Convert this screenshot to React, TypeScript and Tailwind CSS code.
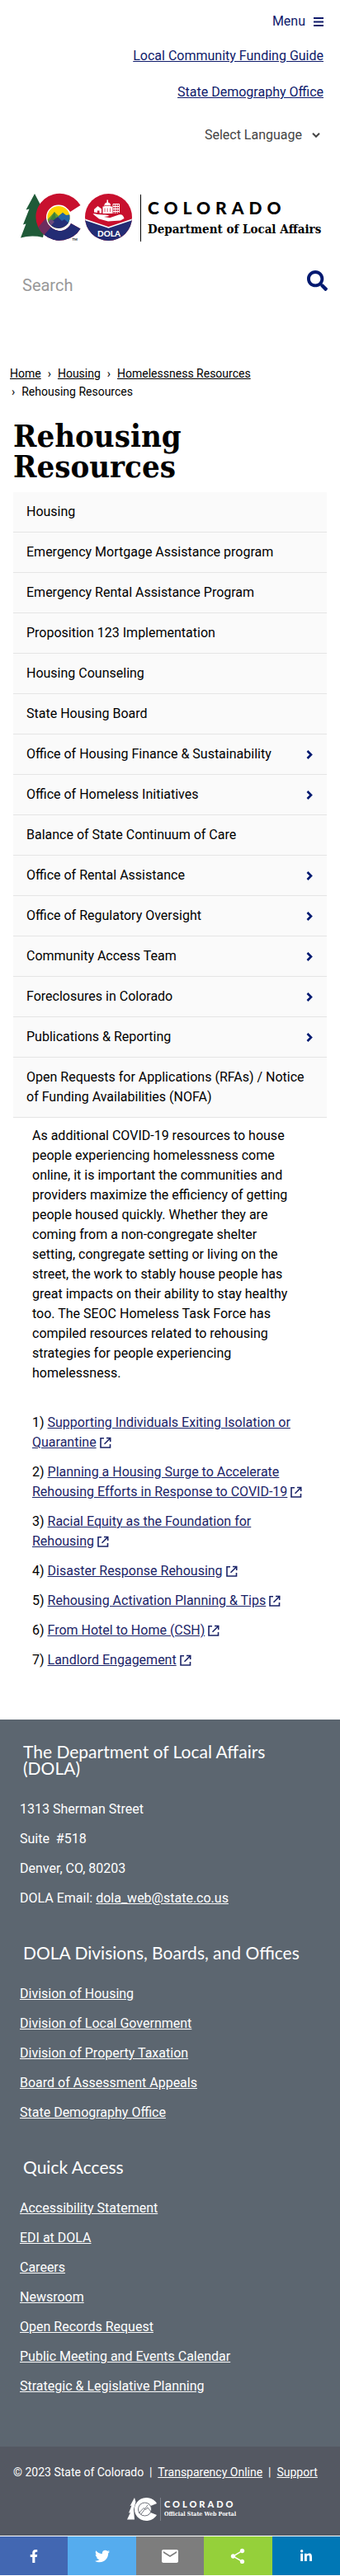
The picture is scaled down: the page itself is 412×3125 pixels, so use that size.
import React from "react";
import { FaFacebookF, FaTwitter, FaLinkedinIn, FaSearch } from "react-icons/fa";
import { MdEmail, MdShare } from "react-icons/md";

const sections: { label: string; expandable?: boolean }[] = [
  { label: "Housing" },
  { label: "Emergency Mortgage Assistance program" },
  { label: "Emergency Rental Assistance Program" },
  { label: "Proposition 123 Implementation" },
  { label: "Housing Counseling" },
  { label: "State Housing Board" },
  { label: "Office of Housing Finance & Sustainability", expandable: true },
  { label: "Office of Homeless Initiatives", expandable: true },
  { label: "Balance of State Continuum of Care" },
  { label: "Office of Rental Assistance", expandable: true },
  { label: "Office of Regulatory Oversight", expandable: true },
  { label: "Community Access Team", expandable: true },
  { label: "Foreclosures in Colorado", expandable: true },
  { label: "Publications & Reporting", expandable: true },
  { label: "Open Requests for Applications (RFAs) / Notice of Funding Availabilities (NOFA)" },
];

const resources = [
  "Supporting Individuals Exiting Isolation or Quarantine",
  "Planning a Housing Surge to Accelerate Rehousing Efforts in Response to COVID-19",
  "Racial Equity as the Foundation for Rehousing",
  "Disaster Response Rehousing",
  "Rehousing Activation Planning & Tips",
  "From Hotel to Home (CSH)",
  "Landlord Engagement",
];

const divisions = [
  "Division of Housing",
  "Division of Local Government",
  "Division of Property Taxation",
  "Board of Assessment Appeals",
  "State Demography Office",
];

const quickAccess = [
  "Accessibility Statement",
  "EDI at DOLA",
  "Careers",
  "Newsroom",
  "Open Records Request",
  "Public Meeting and Events Calendar",
  "Strategic & Legislative Planning",
];

function DolaEmblem() {
  return (
    <svg viewBox="24 234 138 60" className="h-[60px] w-[138px] shrink-0" aria-hidden="true">
      <defs>
        <clipPath id="c-shape">
          <path d="M97.500 249 A29 28.500 0 1 0 97.500 277.500 L86 271 A15 15 0 1 1 85 257 Z" />
        </clipPath>
        <clipPath id="c-core">
          <circle cx="71" cy="263.500" r="13.600" />
        </clipPath>
        <clipPath id="seal">
          <circle cx="131.500" cy="263.500" r="28.500" />
        </clipPath>
      </defs>
      <path
        d="M42 235 L31.500 254.500 L35.500 253.500 L28 272.500 L31.500 271.500 L25 288.500 Q38 285 52 288 L58 262 L52 246 L48.500 247.500 Z"
        fill="#1f5a38"
      />
      <g clipPath="url(#c-shape)">
        <rect x="40" y="234" width="60" height="60" fill="#c8102e" />
        <path d="M40 283 L57 263 L72 278 V294 H40 Z" fill="#6d2d5e" />
        <path d="M50 289 L64 273 L100 263 V294 H52 Z" fill="#232c74" />
      </g>
      <circle cx="71" cy="263.500" r="15" fill="#fff" />
      <g clipPath="url(#c-core)">
        <rect x="56" y="248" width="30" height="31" fill="#ffd100" />
        <path d="M56 268 L66 257 L71 262 L76 258 L86 266 V272 H56 Z" fill="#5f9a30" />
        <path d="M70 268 L71 262 L76 258 L80 261 L86 260 V274 H66 Z" fill="#2565a3" />
        <path d="M60 268 L66 257 L68 265 L63 272 Z" fill="#3b7f3c" />
        <path d="M56 274 L70 263 L75 268 L78 266 L87 274 V280 H56 Z" fill="#263077" />
        <path d="M56 271 L62 266 L66 269 L59 277 Z" fill="#6b4a7c" />
      </g>
      <text x="87.500" y="291.500" fontSize="4" fontWeight="700" fontFamily="Lato, sans-serif">TM</text>
      <g clipPath="url(#seal)">
        <rect x="102" y="234" width="59" height="59" fill="#c8102e" />
        <path d="M102 265.500 L131.500 275.500 L161 265.500 V293 H102 Z" fill="#232c74" />
        <path d="M102 266 L131.500 276 L161 266" fill="none" stroke="#fff" strokeWidth="1.500" />
      </g>
      <path
        d="M112.500 259.500 Q115 259 118 260 L125 260.500 Q131 260 132.500 262 L126 263 L133 264.200 L144 260.500 Q149 259 150.500 265 L146 267.500 L131 268.500 L120 265.500 Z"
        fill="#fff"
      />
      <path d="M114 257.500 V254 L118.500 250 L123 253.500 V258.500 H120.500 V255.500 H118 V258 Z" fill="#fff" />
      <path
        d="M124.500 259 V250.500 H126.500 V248 Q127 246 129.500 245.500 V242.500 H131 V245.500 Q133.500 246 134 248 V250.500 H136 V259 Z"
        fill="#fff"
      />
      <path d="M127 252.500 V257 M130.200 252.500 V257 M133.500 252.500 V257 M127 249.500 H134" stroke="#c8102e" strokeWidth=".7" />
      <path
        d="M137 259 V247.500 H144.500 V258 M139.500 248 V259 M142 248 V259 M137 250.500 H144.500 M137 253.500 H144.500 M137 256.500 H144.500"
        fill="none"
        stroke="#fff"
        strokeWidth="1"
      />
      <text x="132" y="286.500" fontSize="10" fontWeight="900" fill="#fff" textAnchor="middle" fontFamily="Lato, sans-serif">
        DOLA
      </text>
    </svg>
  );
}

function PortalEmblem() {
  return (
    <svg viewBox="0 0 36 28" className="h-7 w-9 shrink-0" aria-hidden="true">
      <path d="M9 0 L3.500 10 L5.500 9.500 L2 18.500 L4 18 L0 26.500 H9 L8 14 L10.500 5 Z" fill="#fff" />
      <path d="M36 7 A14.500 14 0 1 0 36 21 L28.500 18 A8 8 0 1 1 28.500 10 Z" fill="#fff" />
      <circle cx="21.500" cy="14" r="8" fill="#fff" stroke="#545862" strokeWidth=".8" />
      <path d="M14 19 L20 12.500 L22.500 14.500 L25 12 L29 17 M17 20 L25 9" fill="none" stroke="#545862" strokeWidth=".8" />
    </svg>
  );
}

function ExternalIcon() {
  return (
    <svg viewBox="0 0 14 14" className="ml-1 inline-block size-[14px] align-[-2px]" fill="none" stroke="currentColor" strokeWidth="1.600" aria-hidden="true">
      <path d="M5 1.800 H1 V13 H12.500 V9" />
      <path d="M8 1.500 H12.700 V6 M12.500 1.700 L5.500 8.700" />
    </svg>
  );
}

function FooterHeading({ children }: { children: React.ReactNode }) {
  return <h2 className="px-1 font-[Lato,sans-serif] text-[21px] leading-5">{children}</h2>;
}

function FooterLinks({ items }: { items: string[] }) {
  return (
    <ul className="mt-7 flex flex-col gap-3">
      {items.map((item) => (
        <li key={item}>
          <a href="#" className="underline">{item}</a>
        </li>
      ))}
    </ul>
  );
}

export default function App() {
  return (
    <div className="bg-white font-[Roboto,sans-serif] text-base leading-6 text-black">
      <header className="flex flex-col">
        <div className="flex flex-col items-end px-5 pt-[14px] text-[#0e1a6b]">
          <button type="button" className="flex items-center gap-[10px]">
            Menu
            <svg viewBox="0 0 12 11" className="h-[11px] w-3" fill="currentColor" aria-hidden="true">
              <path d="M0 0h12v2H0zM0 4.500h12v2H0zM0 9h12v2H0z" />
            </svg>
          </button>
          <a href="#" className="mt-[18px] underline">Local Community Funding Guide</a>
          <a href="#" className="mt-5 underline">State Demography Office</a>
        </div>
        <div className="mt-7 flex items-center justify-end gap-3 px-6 text-[#444]">
          <select aria-label="Select Language" className="appearance-none bg-transparent text-right">
            <option>Select Language</option>
          </select>
          <svg viewBox="0 0 10 6" className="h-[6px] w-[10px]" fill="none" stroke="currentColor" strokeWidth="2" aria-hidden="true">
            <path d="M1 .8 L5 4.800 L9 .8" />
          </svg>
        </div>
        <a href="#" className="mt-[58px] flex items-center gap-2 pr-4 pl-6" aria-label="Colorado Department of Local Affairs">
          <DolaEmblem />
          <span className="flex h-[57px] flex-col justify-center gap-2 border-l border-black pl-2">
            <span className="font-[Lato,sans-serif] text-[21px] leading-5 font-black tracking-[6px]">COLORADO</span>
            <span className="font-['DejaVu_Serif_Condensed','DejaVu_Serif',serif] text-[15px] leading-4 font-bold whitespace-nowrap">
              Department of Local Affairs
            </span>
          </span>
        </a>
        <form className="mt-8 flex items-start justify-between pr-[15px] pl-[27px]">
          <input
            type="search"
            aria-label="Search"
            placeholder="Search"
            className="mt-1 h-8 min-w-0 flex-1 bg-transparent text-xl outline-none placeholder:text-[#999]"
          />
          <button type="submit" aria-label="Submit search" className="mt-[2px] text-[#001970]">
            <FaSearch className="size-[25px]" />
          </button>
        </form>
      </header>

      <main>
        <nav aria-label="Breadcrumb" className="mt-[80px] px-3 text-sm leading-[22px]">
          <ol className="flex flex-wrap">
            <li><a href="#" className="underline">Home</a></li>
            <li><span className="mx-2">›</span><a href="#" className="underline">Housing</a></li>
            <li><span className="mx-2">›</span><a href="#" className="underline">Homelessness Resources</a></li>
            <li className="basis-full"><span className="mr-2 ml-[2px]">›</span>Rehousing Resources</li>
          </ol>
        </nav>

        <h1 className="mt-6 max-w-[300px] px-4 font-['DejaVu_Serif_Condensed','DejaVu_Serif',serif] text-[38px] leading-[37px] font-bold">
          Rehousing Resources
        </h1>

        <nav aria-label="Housing sections" className="mx-4 mt-[13px] bg-[#fafafa]">
          <ul>
            {sections.map((s) => (
              <li key={s.label} className="flex items-center justify-between border-b border-[#e5e5e5] py-3 pr-[17px] pl-4">
                <a href="#">{s.label}</a>
                {s.expandable && (
                  <button type="button" aria-label={"Expand " + s.label} className="text-[#001970]">
                    <svg viewBox="0 0 8 11" className="h-[11px] w-2" fill="none" stroke="currentColor" strokeWidth="2.600" aria-hidden="true">
                      <path d="M1.500 1 L6 5.500 L1.500 10" />
                    </svg>
                  </button>
                )}
              </li>
            ))}
          </ul>
        </nav>

        <section className="mt-[10px] px-[39px]">
          <p className="pr-2">
            As additional COVID-19 resources to house people experiencing homelessness come online, it is important the
            communities and providers maximize the efficiency of getting people housed quickly. Whether they are coming
            from a non-congregate shelter setting, congregate setting or living on the street, the work to stably house
            people has great impacts on their ability to stay healthy too. The SEOC Homeless Task Force has compiled
            resources related to rehousing strategies for people experiencing homelessness.
          </p>
          <ol className="mt-9 flex flex-col gap-3">
            {resources.map((r, i) => (
              <li key={r}>
                {i + 1}){" "}
                <a href="#" className="text-[#1b2468]">
                  <span className="underline">{r}</span>
                  <ExternalIcon />
                </a>
              </li>
            ))}
          </ol>
        </section>
      </main>

      <footer className="mt-[60px] text-white">
        <div className="bg-[#5c6670] px-6 pt-[29px] pb-[61px]">
          <FooterHeading>The Department of Local Affairs (DOLA)</FooterHeading>
          <address className="mt-7 flex flex-col gap-3 not-italic">
            <p>1313 Sherman Street</p>
            <p>Suite &nbsp;#518</p>
            <p>Denver, CO, 80203</p>
            <p>DOLA Email: <a href="#" className="underline">dola_web@state.co.us</a></p>
          </address>
          <div className="mt-11">
            <FooterHeading>DOLA Divisions, Boards, and Offices</FooterHeading>
            <FooterLinks items={divisions} />
          </div>
          <div className="mt-11">
            <FooterHeading>Quick Access</FooterHeading>
            <FooterLinks items={quickAccess} />
          </div>
        </div>
        <div className="flex flex-col items-center bg-[#545862] px-4 pt-[19px] pb-[18px]">
          <p className="self-start text-sm leading-6">
            © 2023 State of Colorado&nbsp; |&nbsp; <a href="#" className="underline">Transparency Online</a>&nbsp; |&nbsp;{" "}
            <a href="#" className="underline">Support</a>
          </p>
          <a href="#" className="mt-[19px] ml-7 flex gap-1" aria-label="Colorado Official State Web Portal">
            <PortalEmblem />
            <span className="flex flex-col justify-center border-l border-[#7b7f88] pl-1">
              <span className="font-[Lato,sans-serif] text-[11px] leading-3 font-black tracking-[3px]">COLORADO</span>
              <span className="font-['DejaVu_Serif_Condensed','DejaVu_Serif',serif] text-[7px] leading-3 font-bold">
                Official State Web Portal
              </span>
            </span>
          </a>
        </div>
        <div className="grid grid-cols-5 border-y border-white">
          <a href="#" aria-label="Facebook" className="flex h-[47px] items-center justify-center bg-[#4267b2]"><FaFacebookF className="size-4" /></a>
          <a href="#" aria-label="Twitter" className="flex h-[47px] items-center justify-center bg-[#55acee]"><FaTwitter className="size-[18px]" /></a>
          <a href="#" aria-label="Email" className="flex h-[47px] items-center justify-center bg-[#7d7d7d]"><MdEmail className="size-6" /></a>
          <a href="#" aria-label="Share" className="flex h-[47px] items-center justify-center bg-[#95d03a]"><MdShare className="size-[22px]" /></a>
          <a href="#" aria-label="LinkedIn" className="flex h-[47px] items-center justify-center bg-[#0077b5]"><FaLinkedinIn className="size-4" /></a>
        </div>
      </footer>
    </div>
  );
}
